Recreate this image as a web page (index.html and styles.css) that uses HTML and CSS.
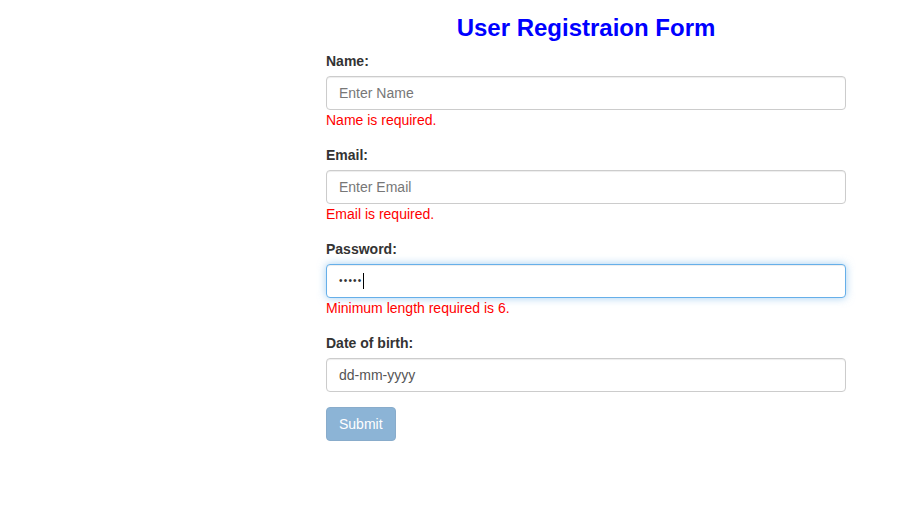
FILE: index.html
```html
<!DOCTYPE html>
<html lang="en">
<head>
<meta charset="utf-8">
<title>User Registration Form</title>
<link rel="stylesheet" href="styles.css">
</head>
<body>
  <div class="page">
    <div class="form-col">
      <h3 class="title">User Registraion Form</h3>
      <form class="reg-form" onsubmit="return false">
        <div class="form-group">
          <label class="label">Name:</label>
          <input class="form-control" type="text" placeholder="Enter Name">
          <div class="error">Name is required.</div>
        </div>
        <div class="form-group">
          <label class="label">Email:</label>
          <input class="form-control" type="text" placeholder="Enter Email">
          <div class="error">Email is required.</div>
        </div>
        <div class="form-group">
          <label class="label">Password:</label>
          <div class="form-control focused"><span class="dots">•••••</span><span class="caret"></span></div>
          <div class="error">Minimum length required is 6.</div>
        </div>
        <div class="form-group">
          <label class="label">Date of birth:</label>
          <div class="form-control date">dd-mm-yyyy</div>
        </div>
        <button class="btn" type="submit" disabled>Submit</button>
      </form>
    </div>
  </div>
</body>
</html>
```
FILE: styles.css
```css
* { box-sizing: border-box; }
html, body {
  margin: 0;
  padding: 0;
  background: #fff;
  font-family: "Liberation Sans", Arial, Helvetica, sans-serif;
  font-size: 14px;
  line-height: 20px;
  color: #333;
}
.page {
  padding-left: 326px;
}
.form-col {
  width: 520px;
}
.title {
  margin: 14px 0 10px;
  font-size: 24px;
  line-height: 27px;
  font-weight: bold;
  color: #0000ff;
  text-align: center;
}
.form-group {
  margin-bottom: 15px;
}
.label {
  display: block;
  font-weight: bold;
  margin-bottom: 5px;
  line-height: 20px;
}
.form-control {
  display: block;
  width: 100%;
  height: 34px;
  padding: 6px 12px;
  font-family: inherit;
  font-size: 14px;
  line-height: 20px;
  color: #555;
  background: #fff;
  border: 1px solid #ccc;
  border-radius: 4px;
  box-shadow: inset 0 1px 1px rgba(0,0,0,.075);
  outline: none;
}
.form-control::placeholder {
  color: #777;
  opacity: 1;
}
.focused {
  border-color: #66afe9;
  box-shadow: inset 0 1px 1px rgba(0,0,0,.075), 0 0 8px rgba(102,175,233,.6);
  display: flex;
  align-items: center;
}
.dots {
  font-size: 10px;
  letter-spacing: 1.2px;
  color: #333;
  line-height: 20px;
}
.caret {
  display: inline-block;
  width: 1px;
  height: 16px;
  background: #000;
  margin-left: 0;
}
.date {
  color: #555;
}
.error {
  color: #ff0000;
  line-height: 20px;
}
.btn {
  display: inline-block;
  height: 34px;
  padding: 6px 12px;
  font-family: inherit;
  font-size: 14px;
  line-height: 20px;
  color: #fff;
  background: #337ab7;
  border: 1px solid #2e6da4;
  border-radius: 4px;
  opacity: .56;
  cursor: not-allowed;
}
```
